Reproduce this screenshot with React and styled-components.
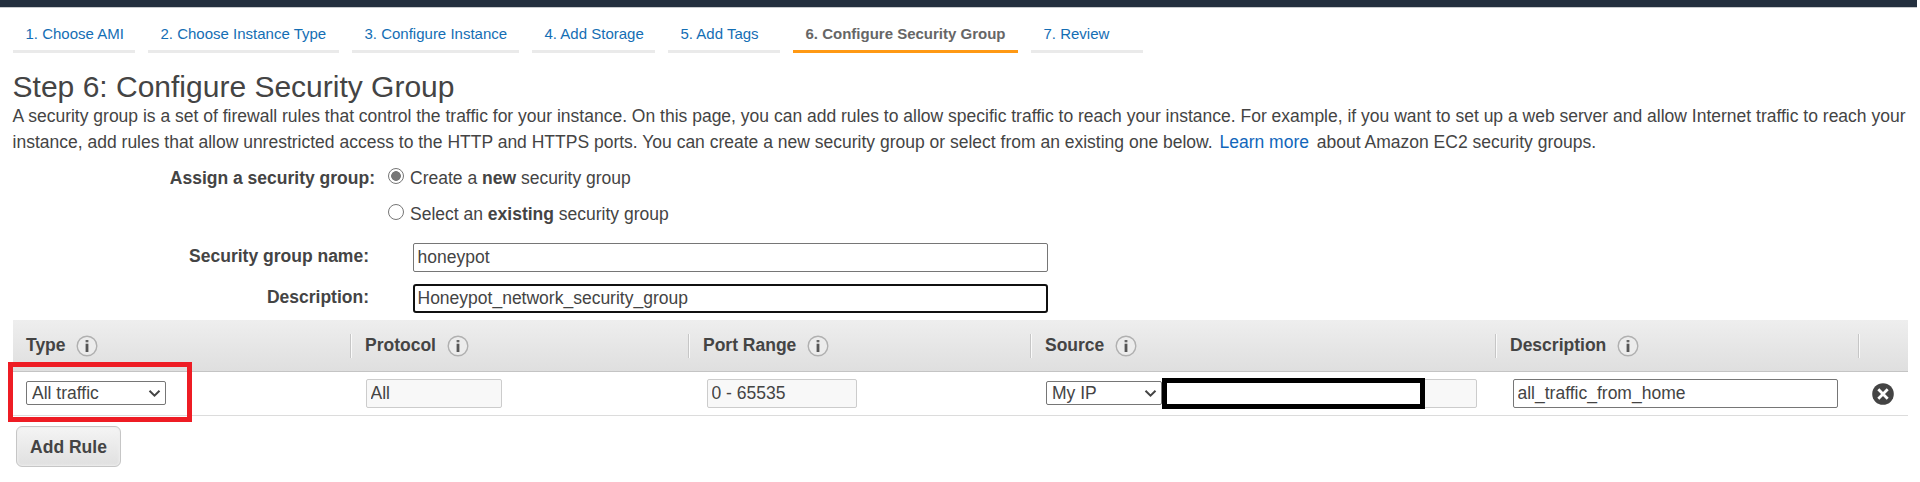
import React from "react";
import styled, { createGlobalStyle, css } from "styled-components";

const GlobalStyle = createGlobalStyle`
  * { box-sizing: border-box; }
  body {
    margin: 0;
    background: #fff;
    color: #444;
    font-family: "Liberation Sans", Arial, sans-serif;
    font-size: 17.5px;
    line-height: 26px;
  }
  input, select, button { font: inherit; color: inherit; margin: 0; }
`;

const Page = styled.div`
  width: 1920px;
  height: 482px;
  overflow: hidden;
`;

const TopBar = styled.div`
  width: 1917px;
  height: 8px;
  background: #232f3e;
  border-bottom: 1px solid #c8cacd;
`;

const Steps = styled.nav`
  display: flex;
  gap: 13px;
  padding: 13px 0 0 13px;
`;

const Step = styled.a`
  width: ${(p) => p.$width}px;
  height: 32px;
  padding-left: 12.5px;
  font-size: 15px;
  line-height: 26px;
  white-space: nowrap;
  color: #146eb4;
  border-bottom: 3px solid #eaeaea;
  ${(p) =>
    p.$active &&
    css`
      color: #666;
      font-weight: bold;
      border-bottom-color: #ff9914;
    `}
`;

const Title = styled.h1`
  margin: 15px 0 0 12.6px;
  font-size: 30px;
  font-weight: normal;
  line-height: 38px;
  white-space: nowrap;
`;

const Intro = styled.p`
  margin: -3px 0 0 12.6px;
  white-space: nowrap;
`;

const Link = styled.a`
  color: #1166bb;
  margin: 0 3px 0 2px;
`;

const Form = styled.form`
  display: flex;
  flex-direction: column;
`;

const Choices = styled.div`
  margin-bottom: 16px;
`;

const ChoiceRow = styled.div`
  display: flex;
  height: 36px;
  padding-top: 10px;
`;

const FieldRow = styled.div`
  display: flex;
  align-items: flex-start;
  height: ${(p) => p.$height}px;
`;

const Label = styled.label`
  width: ${(p) => p.$width}px;
  margin-right: ${(p) => p.$gap}px;
  text-align: right;
  font-weight: bold;
  white-space: nowrap;
  line-height: 26px;
`;

const Radio = styled.input.attrs({ type: "radio" })`
  appearance: none;
  width: 16px;
  height: 16px;
  margin: 3px 6px 0 0;
  border: 1px solid #767676;
  border-radius: 50%;
  background: #fff;
  &:checked {
    background: radial-gradient(circle, #767676 0 4.5px, #fff 5.2px);
  }
`;

const Field = styled.input`
  width: ${(p) => p.$width}px;
  height: 29px;
  padding: 0 0 0 3.5px;
  line-height: 25px;
  border: 1px solid #767676;
  border-radius: 2px;
  background: #fff;
  outline: none;
  ${(p) =>
    p.$focused &&
    css`
      border: 2px solid #101010;
      border-radius: 3px;
      padding-left: 2.5px;
    `}
  ${(p) =>
    p.$muted &&
    css`
      border-color: #ccc;
      background: #f8f8f8;
    `}
`;

const Table = styled.section`
  width: 1895px;
  margin-left: 13px;
`;

const columns = "337px 338px 342px 465px 363px 50px";

const HeadRow = styled.div`
  display: grid;
  grid-template-columns: ${columns};
  align-items: start;
  height: 52px;
  padding-top: 14px;
  background: linear-gradient(#eee, #dfdfdf);
  border-bottom: 1px solid #c4c4c4;
`;

const HeadCell = styled.div`
  display: flex;
  gap: ${(p) => (p.$first ? 10 : 11)}px;
  height: 24px;
  padding-left: ${(p) => (p.$first ? 12 : 14)}px;
  font-weight: bold;
  line-height: 22px;
  white-space: nowrap;
  border-left: 1px solid ${(p) => (p.$first ? "transparent" : "#c6c6c6")};
  box-shadow: ${(p) => (p.$first ? "none" : "inset 1px 0 #fafafa")};
`;

const InfoSvg = styled.svg`
  width: 22px;
  height: 22px;
  margin-top: 1px;
`;

const RuleRow = styled.div`
  display: grid;
  grid-template-columns: ${columns};
  height: 44px;
  border-bottom: 1px solid #dcdcdc;
`;

const Cell = styled.div`
  position: relative;
  display: flex;
  align-items: flex-start;
  padding: 7px 0 0 ${(p) => p.$left}px;
`;

const SelectBox = styled.div`
  position: relative;
  display: flex;
  width: ${(p) => p.$width}px;
  margin-top: 2px;
`;

const Select = styled.select`
  appearance: none;
  width: 100%;
  height: 24px;
  padding: 0 0 0 5px;
  line-height: 22px;
  border: 1px solid #767676;
  border-radius: 2px;
  background: #fff;
`;

const ChevronSvg = styled.svg`
  position: absolute;
  right: 5px;
  top: 8px;
  width: 13px;
  height: 9px;
  pointer-events: none;
`;

const RedHighlight = styled.div`
  position: absolute;
  left: -5px;
  top: -10px;
  width: 184px;
  height: 60px;
  border: 5px solid #ee1c24;
  pointer-events: none;
`;

const Redaction = styled.div`
  position: absolute;
  left: 132px;
  top: 6px;
  width: 263px;
  height: 31px;
  border: 5px solid #000;
  background: #fff;
`;

const DeleteSvg = styled.svg`
  width: 22px;
  height: 22px;
  margin-top: 4px;
`;

const AddButton = styled.button`
  display: block;
  width: 105px;
  height: 41px;
  margin: 10px 0 0 16px;
  padding: 0;
  font-weight: bold;
  line-height: 34px;
  border: 1px solid #c6c6c6;
  border-radius: 6px;
  background: linear-gradient(#f4f4f4, #e0e0e0);
  box-shadow: inset 0 0 2px 1px #eee;
`;

const Info = () => (
  <InfoSvg viewBox="0 0 22 22">
    <circle cx="11" cy="11" r="9.8" fill="#ececec" stroke="#b0b0b0" strokeWidth="1.4" />
    <path d="M11 8.7v8.3" stroke="#555" strokeWidth="2.8" />
    <path d="M11 5v2.3" stroke="#666" strokeWidth="2.8" />
  </InfoSvg>
);

const Chevron = () => (
  <ChevronSvg viewBox="0 0 13 9">
    <path d="M1.5 1.7 6.5 6.7 11.5 1.7" fill="none" stroke="#444" strokeWidth="2" />
  </ChevronSvg>
);

const steps = [
  ["1. Choose AMI", 122],
  ["2. Choose Instance Type", 191],
  ["3. Configure Instance", 167],
  ["4. Add Storage", 123],
  ["5. Add Tags", 112],
  ["6. Configure Security Group", 225],
  ["7. Review", 112],
];

const headings = ["Type", "Protocol", "Port Range", "Source", "Description"];

export default function App() {
  return (
    <Page>
      <GlobalStyle />
      <TopBar />
      <Steps>
        {steps.map(([name, width], i) => (
          <Step key={name} $width={width} $active={i === 5}>
            {name}
          </Step>
        ))}
      </Steps>
      <Title>Step 6: Configure Security Group</Title>
      <Intro>
        A security group is a set of firewall rules that control the traffic for your instance. On this page, you can add
        rules to allow specific traffic to reach your instance. For example, if you want to set up a web server and allow
        Internet traffic to reach your
        <br />
        instance, add rules that allow unrestricted access to the HTTP and HTTPS ports. You can create a new security
        group or select from an existing one below. <Link>Learn more</Link> about Amazon EC2 security groups.
      </Intro>
      <Form>
        <Choices>
          <ChoiceRow>
            <Label $width={375} $gap={13}>Assign a security group:</Label>
            <Radio name="group" defaultChecked />
            <span>Create a <b>new</b> security group</span>
          </ChoiceRow>
          <ChoiceRow>
            <Label $width={375} $gap={13} />
            <Radio name="group" />
            <span>Select an <b>existing</b> security group</span>
          </ChoiceRow>
        </Choices>
        <FieldRow $height={41}>
          <Label $width={369} $gap={44}>Security group name:</Label>
          <Field $width={635} defaultValue="honeypot" />
        </FieldRow>
        <FieldRow $height={36}>
          <Label $width={369} $gap={44}>Description:</Label>
          <Field $width={635} $focused defaultValue="Honeypot_network_security_group" />
        </FieldRow>
      </Form>
      <Table>
        <HeadRow>
          {headings.map((name, i) => (
            <HeadCell key={name} $first={i === 0}>
              {name}
              <Info />
            </HeadCell>
          ))}
          <HeadCell />
        </HeadRow>
        <RuleRow>
          <Cell $left={13}>
            <SelectBox $width={140}>
              <Select><option>All traffic</option></Select>
              <Chevron />
            </SelectBox>
            <RedHighlight />
          </Cell>
          <Cell $left={16}>
            <Field $width={136} $muted readOnly value="All" />
          </Cell>
          <Cell $left={19}>
            <Field $width={150} $muted readOnly value="0 - 65535" />
          </Cell>
          <Cell $left={16}>
            <SelectBox $width={116}>
              <Select><option>My IP</option></Select>
              <Chevron />
            </SelectBox>
            <Field $width={315} $muted readOnly value="" />
            <Redaction />
          </Cell>
          <Cell $left={18}>
            <Field $width={325} defaultValue="all_traffic_from_home" />
          </Cell>
          <Cell $left={14}>
            <DeleteSvg viewBox="0 0 22 22">
              <circle cx="11" cy="11" r="10.8" fill="#444" />
              <path d="M6.3 6.3l9.4 9.4M15.7 6.3l-9.4 9.4" stroke="#fff" strokeWidth="2.8" />
            </DeleteSvg>
          </Cell>
        </RuleRow>
      </Table>
      <AddButton type="button">Add Rule</AddButton>
    </Page>
  );
}
